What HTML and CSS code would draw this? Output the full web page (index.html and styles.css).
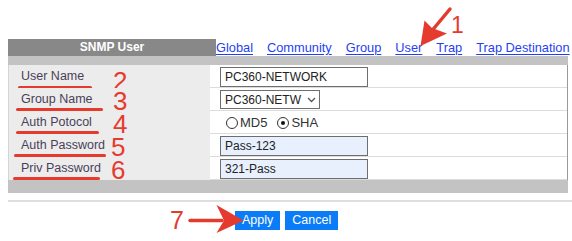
FILE: index.html
```html
<!DOCTYPE html>
<html>
<head>
<meta charset="utf-8">
<link rel="stylesheet" href="styles.css">
</head>
<body>
<div class="page">
  <div class="tabs">
    <div class="title">SNMP User</div>
    <nav class="links">
      <a href="#">Global</a>
      <a href="#">Community</a>
      <a href="#">Group</a>
      <a href="#">User</a>
      <a href="#">Trap</a>
      <a href="#">Trap Destination</a>
    </nav>
  </div>
  <div class="panel">
    <div class="bar top"></div>
    <div class="row">
      <div class="label"><span>User Name</span><i class="ul u1"></i><b class="num n2">2</b></div>
      <div class="value"><div class="field wide">PC360-NETWORK</div></div>
    </div>
    <div class="row">
      <div class="label"><span>Group Name</span><i class="ul u2"></i><b class="num">3</b></div>
      <div class="value"><div class="field select">PC360-NETW<svg class="chev" width="9" height="6" viewBox="0 0 9 6"><path d="M1 1l3.5 3.5L8 1" fill="none" stroke="#555" stroke-width="1.3"/></svg></div></div>
    </div>
    <div class="row">
      <div class="label"><span>Auth Potocol</span><i class="ul u3"></i><b class="num">4</b></div>
      <div class="value radios">
        <span class="radio"></span><span class="rtext">MD5</span>
        <span class="radio on"></span><span class="rtext">SHA</span>
      </div>
    </div>
    <div class="row">
      <div class="label"><span>Auth Password</span><i class="ul u4"></i><b class="num n5">5</b></div>
      <div class="value"><div class="field wide fill">Pass-123</div></div>
    </div>
    <div class="row">
      <div class="label"><span>Priv Password</span><i class="ul u5"></i><b class="num n5">6</b></div>
      <div class="value"><div class="field wide fill">321-Pass</div></div>
    </div>
    <div class="bar bottom"></div>
  </div>
  <div class="sep"></div>
  <div class="actions">
    <button class="btn">Apply</button>
    <button class="btn">Cancel</button>
  </div>
</div>

<b class="num n1">1</b>
<b class="num n7">7</b>
<svg class="arrow" width="572" height="241" viewBox="0 0 572 241">
  <line x1="450" y1="9" x2="430" y2="33" stroke="#e53b2f" stroke-width="3.5" stroke-linecap="round"/>
  <path d="M420.5 46 L424.5 20.5 L432 28 L447 33.5 Z" fill="#e53b2f"/>
  <line x1="190" y1="220.5" x2="222" y2="220.5" stroke="#e53b2f" stroke-width="3.5" stroke-linecap="round"/>
  <path d="M243.5 220.5 L216.5 205 L224 220.5 L216.5 233 Z" fill="#e53b2f"/>
</svg>
</body>
</html>
```

FILE: styles.css
```css
* { box-sizing: border-box; }
html, body { margin: 0; padding: 0; background: #fff; }
body {
  width: 572px;
  height: 241px;
  position: relative;
  overflow: hidden;
  font-family: "Liberation Sans", Arial, sans-serif;
  font-size: 12px;
}
.page { padding: 39px 0 0 8px; }

.tabs { display: flex; align-items: stretch; height: 17px; width: 564px; }
.title {
  flex: 0 0 208px;
  background: #888888;
  color: #fff;
  font-weight: bold;
  font-size: 12px;
  text-align: center;
  line-height: 17px;
}
.links { display: flex; gap: 14px; align-items: flex-end; flex: 0 0 auto; white-space: nowrap; }
.links a {
  flex: 0 0 auto;
  color: #1f3ff5;
  font-size: 12.8px;
  line-height: 14px;
  text-decoration: underline;
  text-underline-offset: 2px;
  padding-bottom: 1px;
}

.panel { width: 560px; }
.bar { background: #c3c3c3; }
.bar.top { height: 9px; }
.bar.bottom { height: 13px; }

.row {
  display: grid;
  grid-template-columns: 202px 1fr;
  height: 23px;
  border-bottom: 1px solid #dcdcdc;
}
.row:last-of-type { border-bottom: none; }
.label {
  position: relative;
  background: #ececec;
  color: #4a3f58;
  padding-left: 12px;
  line-height: 23px;
  font-size: 12.5px;
  border-left: 1px solid #d4d4d4;
}
.value {
  display: flex;
  align-items: center;
  padding-left: 10px;
  border-right: 1px solid #9a9a9a;
}
.field {
  height: 20px;
  border: 1px solid #6e6e6e;
  padding-left: 4px;
  line-height: 18px;
  color: #222;
  font-size: 12px;
  display: flex;
  align-items: center;
}
.field.wide { width: 148px; }
.field.fill { background: #e8f0fe; }
.field.select { width: 100px; height: 19px; justify-content: space-between; padding-right: 3px; }
.chev { display: block; }

.radios { padding-left: 16px; gap: 2px; color: #333; font-size: 13px; }
.radio {
  width: 12px; height: 12px;
  border: 1px solid #333;
  border-radius: 50%;
  position: relative;
  display: inline-block;
}
.radio.on::after {
  content: "";
  position: absolute;
  left: 3px; top: 3px;
  width: 4px; height: 4px;
  background: #111;
  border-radius: 50%;
}
.rtext { margin-right: 8px; }

.ul {
  position: absolute;
  height: 3px;
  background: #e53b2f;
  border-radius: 2px;
}
.u1 { left: 9px; width: 74px; top: 21px; }
.u2 { left: 7px; width: 87px; top: 20px; }
.u3 { left: 7px; width: 83px; top: 20px; }
.u4 { left: 5px; width: 92px; top: 20px; }
.u5 { left: 4px; width: 87px; top: 20px; }

.num {
  position: absolute;
  color: #e53b2f;
  font-weight: normal;
  font-size: 26px;
  line-height: 20px;
  font-family: "Liberation Sans", Arial, sans-serif;
}
.label .num { left: 104px; top: 3px; }
.label .num.n2 { top: 6px; }
.label .num.n5 { left: 102px; }
.num.n1 { left: 451px; top: 14px; font-size: 23px; line-height: 23px; }
.num.n7 { left: 170px; top: 208px; font-size: 25px; line-height: 25px; }

.arrow { position: absolute; left: 0; top: 0; pointer-events: none; }

.sep { height: 2px; background: #dedede; margin-top: 7px; width: 564px; }
.actions { display: flex; gap: 5px; padding-left: 227px; margin-top: 9px; }
.btn {
  height: 19px;
  border: none;
  background: #0a7cf8;
  color: #fff;
  font-family: "Liberation Sans", Arial, sans-serif;
  font-size: 12.5px;
  padding: 0 7px;
  line-height: 19px;
}
```
